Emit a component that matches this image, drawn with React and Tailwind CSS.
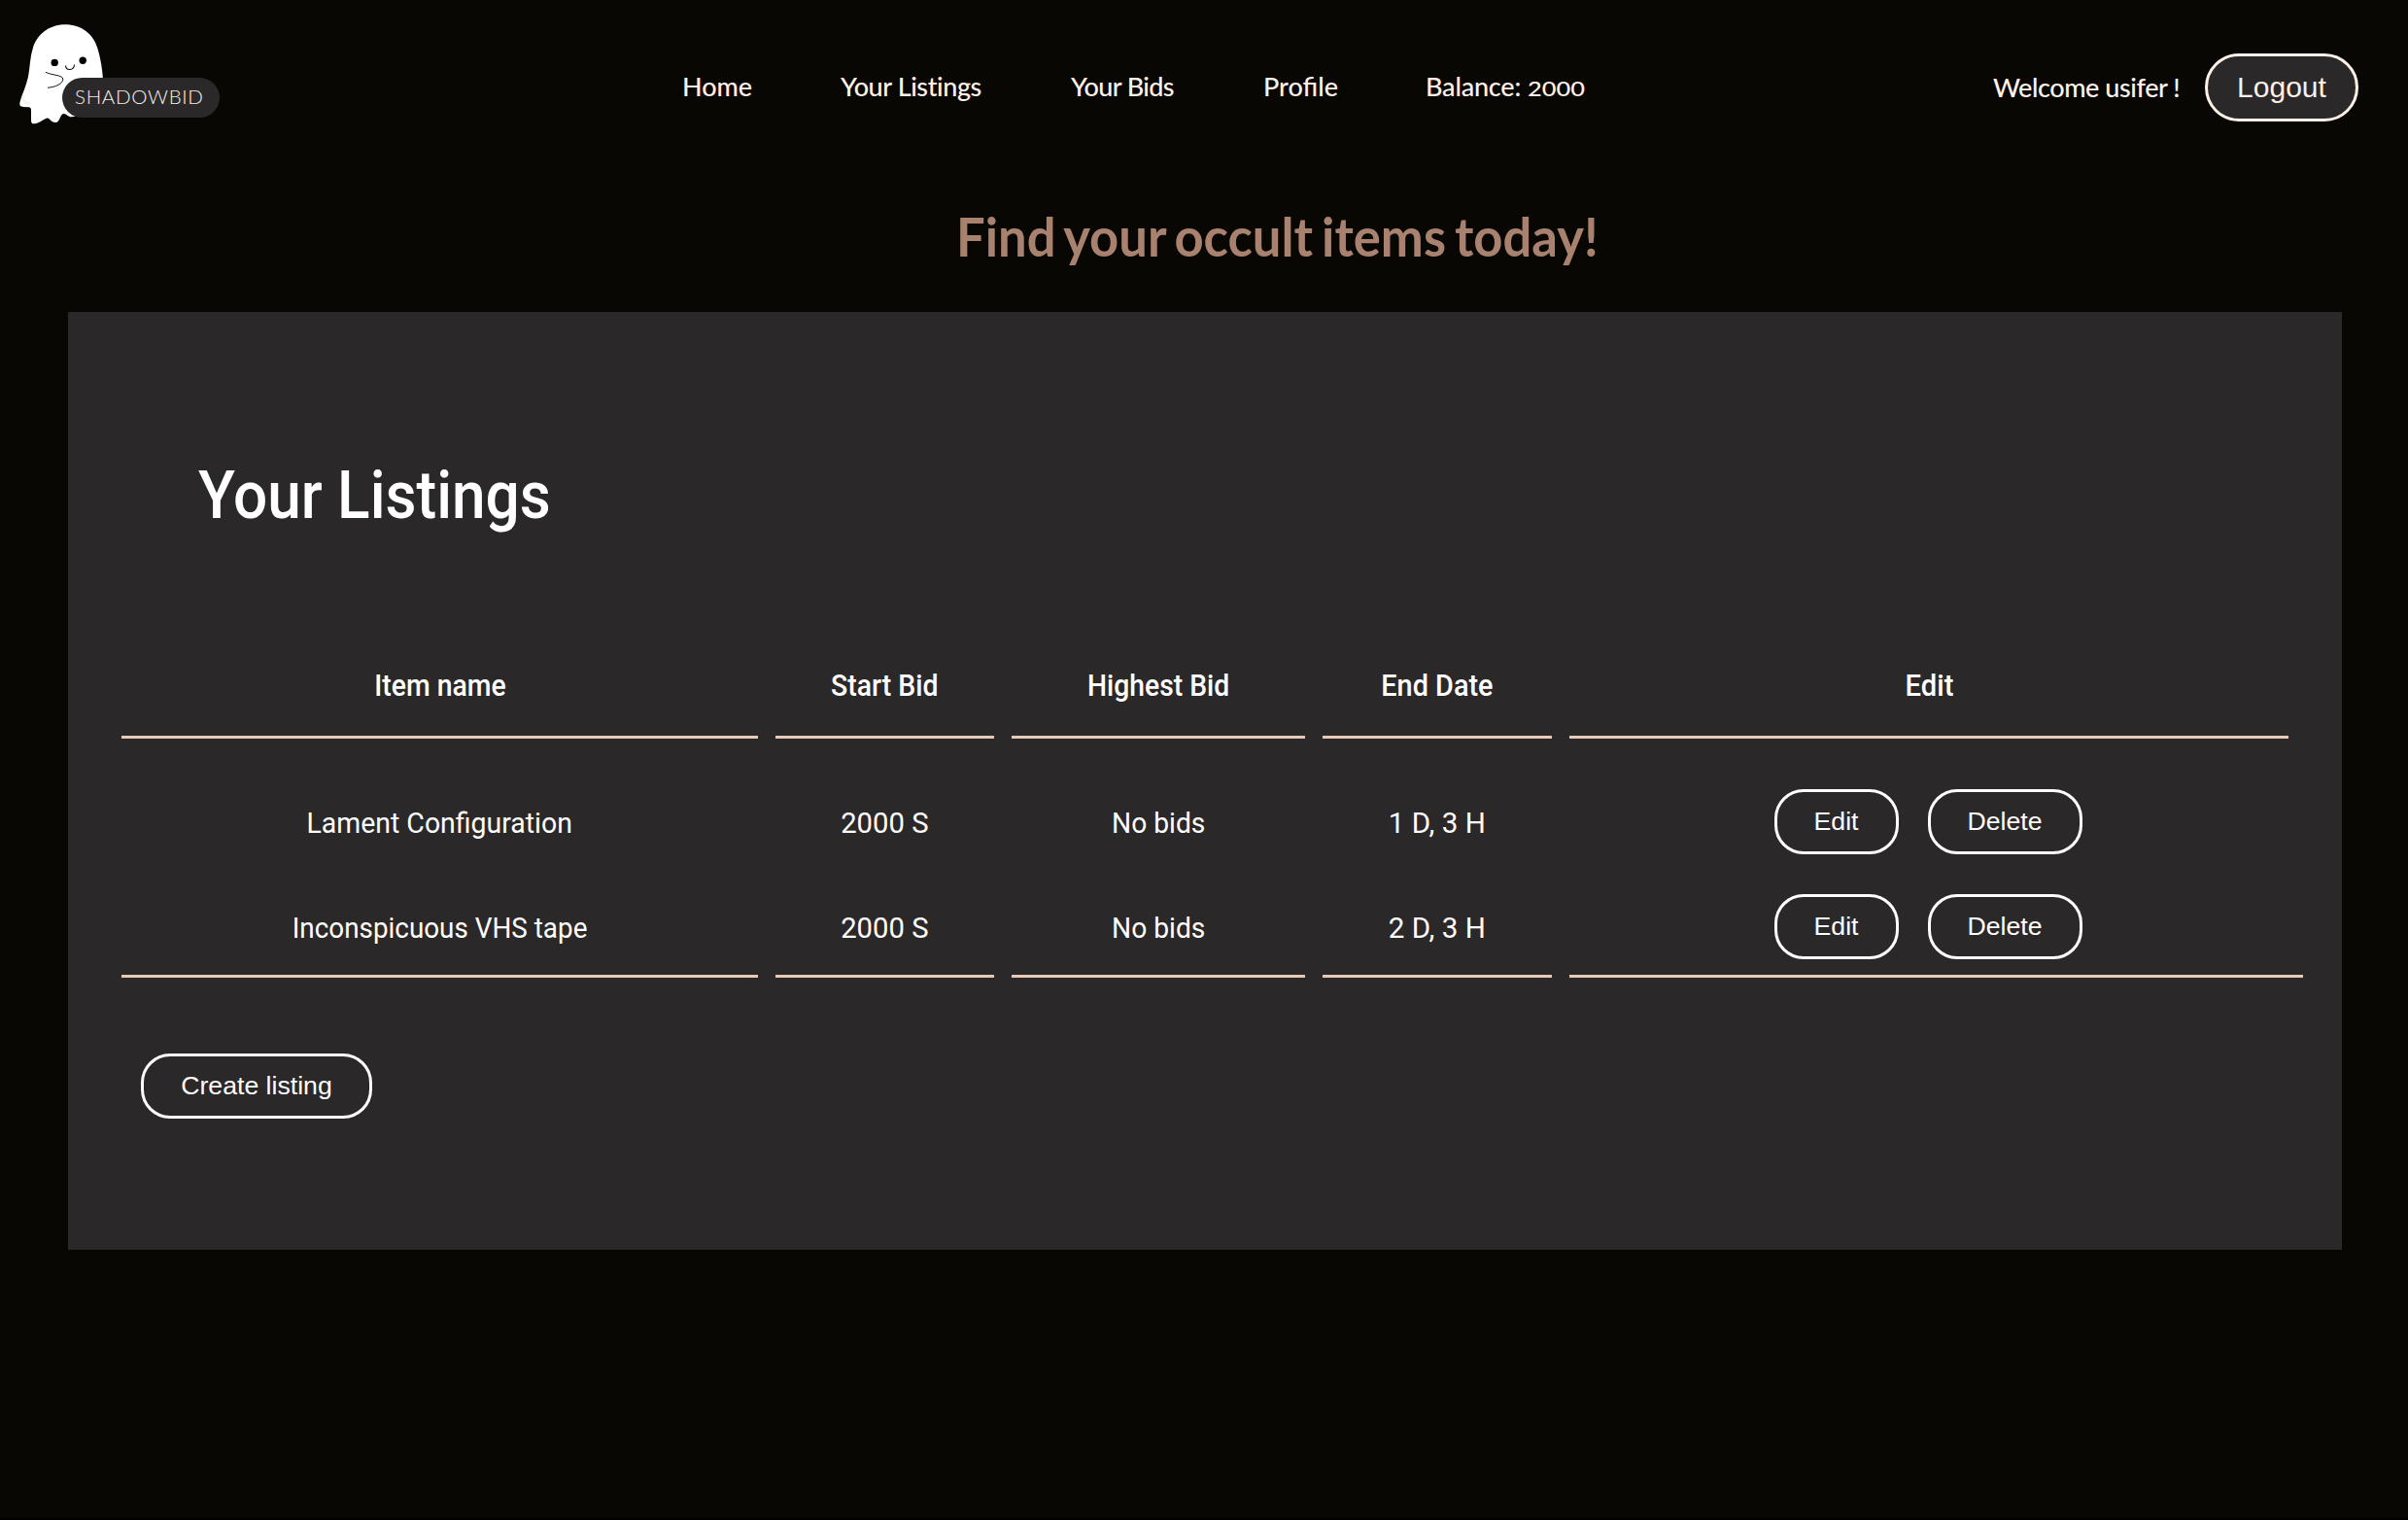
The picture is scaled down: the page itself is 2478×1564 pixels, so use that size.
import React from "react";

const navItems = [
  { label: "Home", cls: "w-[73px] tracking-[-0.1px]" },
  { label: "Your Listings", cls: "w-[147px] tracking-[-0.4px]" },
  { label: "Your Bids", cls: "w-[108px] tracking-[-0.6px]" },
  { label: "Profile", cls: "w-[77px]" },
];

const columns = [
  { label: "Item name", cls: "scale-x-[0.915]" },
  { label: "Start Bid", cls: "scale-x-[0.918]" },
  { label: "Highest Bid", cls: "scale-x-[0.912]" },
  { label: "End Date", cls: "scale-x-[0.93]" },
  { label: "Edit", cls: "scale-x-[0.94]" },
];

const listings = [
  { name: "Lament Configuration", nameCls: "scale-x-[0.948]", start: "2000 S", highest: "No bids", end: "1 D, 3 H" },
  { name: "Inconspicuous VHS tape", nameCls: "scale-x-[0.928]", start: "2000 S", highest: "No bids", end: "2 D, 3 H" },
];

const gridCls = "grid grid-cols-[655px_225px_302px_236px_755px] gap-x-[18px]";

function Logo() {
  return (
    <div className="relative h-[150px] w-[260px] shrink-0">
      <svg className="block h-[150px] w-[260px]" viewBox="0 0 260 150" fill="none">
        <path
          fill="#fff"
          d="M67 25.300C50 25.300 38 36 34 49C31 58 31 67 29.500 76C27.500 88 23 96 20.500 105C19.800 108.500 21 109.800 24 110L30 110.300C31.800 110.500 32 112 32 114V124C32 127.500 34 127.800 37 127C42 126 45 122 49 121.500C51.500 121.500 52 126 57 126C62 126 61.500 117.500 65.500 117C69 117 69.500 120.500 74 120.300L90 118L106 82C105.500 72 103.500 60 100.500 50C96 35 84 25.300 67 25.300Z"
        />
        <path d="M24.500 98C23 103 24.500 106 31 106" stroke="#f1f1f1" strokeWidth="2" />
        <circle cx="56.200" cy="64.400" r="3.700" fill="#000" />
        <circle cx="85.200" cy="62.300" r="3.700" fill="#000" />
        <path d="M67.500 67.500C68 73 76 73 76.500 66.500" stroke="#000" strokeWidth="1.100" />
        <path d="M47 74.300C53 77.500 64 77 64.800 81C65 86.500 57 89.500 49 90.300" stroke="#000" strokeWidth="0.900" />
      </svg>
      <div className="absolute left-[64px] top-[79.5px] flex h-[41.5px] w-[161.5px] items-center rounded-full bg-[#2b2829] pb-[2px] pl-[13px] font-[Lato] text-[20.5px] font-light tracking-[0.7px] text-[#f4f1ef]">
        SHADOWBID
      </div>
    </div>
  );
}

function OutlineButton({ children, className }) {
  return (
    <button
      className={`flex h-[67px] items-center justify-center whitespace-nowrap rounded-[30px] border-[3px] border-white font-['Liberation_Sans'] text-[26.67px] leading-none text-white ${className}`}
    >
      {children}
    </button>
  );
}

function Cell({ last, className = "", textCls = "", children }) {
  return (
    <div className={`flex justify-center ${last ? "h-[86px] border-b-[3px] border-[#e9cab9] pb-4" : "h-[67px]"} items-center ${className}`}>
      {textCls !== null ? <span className={`mt-[2px] whitespace-nowrap ${textCls}`}>{children}</span> : children}
    </div>
  );
}

export default function App() {
  return (
    <div className="h-[1564px] w-[2478px] overflow-hidden border-b-2 border-black bg-[#080704] font-[Roboto]">
      <header className="flex h-[180px] items-center pr-[51px] font-[Lato] text-[27px] font-medium text-[#fff1e7]">
        <div className="self-start">
          <Logo />
        </div>
        <nav className="ml-[442px] flex gap-[90px] whitespace-nowrap pb-[1px]">
          {navItems.map((item) => (
            <a key={item.label} className={item.cls}>
              {item.label}
            </a>
          ))}
          <a className="tracking-[-0.2px]">
            Balance: <span className="inline-block origin-left scale-x-[1.24] text-[20.5px] tracking-normal">2000</span>
          </a>
        </nav>
        <div className="ml-auto flex items-center gap-6">
          <span className="w-[194px] whitespace-nowrap tracking-[-0.42px]">Welcome usifer !</span>
          <button className="flex h-[70px] w-[158px] items-center justify-center rounded-full border-[3px] border-[#fff1e7] bg-[#2b2829] font-['Liberation_Sans'] text-[30px] font-normal leading-none">
            Logout
          </button>
        </div>
      </header>

      <h1 className="ml-[984px] mt-[30px] w-fit origin-left scale-x-[0.956] whitespace-nowrap font-[Lato] text-[55px] font-bold leading-[66px] text-[#a9826f] [word-spacing:-4px]">
        Find your occult items today!
      </h1>

      <main className="ml-[70px] mt-[45px] h-[965px] w-[2340px] bg-[#2b2829] pt-[149px] text-white">
        <h2 className="ml-[134px] w-fit origin-left scale-x-[0.9] whitespace-nowrap text-[69px] font-medium leading-[80px]">
          Your Listings
        </h2>

        <div className="ml-[55px] mt-[138px]">
          <div className={`${gridCls} text-[31px] font-medium leading-[36px]`}>
            {columns.map((c, i) => (
              <div
                key={c.label}
                className={`flex h-[72px] justify-center border-b-[3px] border-[#e9cab9] ${i === 4 ? "mr-[15px]" : ""}`}
              >
                <span className={`h-[36px] whitespace-nowrap ${c.cls}`}>{c.label}</span>
              </div>
            ))}
          </div>

          {listings.map((l, i) => {
            const last = i === listings.length - 1;
            return (
              <div key={l.name} className={`${gridCls} text-[30px] leading-[36px] ${i === 0 ? "mt-[52px]" : "mt-[41px]"}`}>
                <Cell last={last} textCls={l.nameCls}>{l.name}</Cell>
                <Cell last={last} textCls="scale-x-[0.975]">{l.start}</Cell>
                <Cell last={last} textCls="scale-x-[0.94]">{l.highest}</Cell>
                <Cell last={last} textCls="scale-x-[0.985]">{l.end}</Cell>
                <Cell last={last} textCls={null} className="gap-[30px] pr-[17px]">
                  <OutlineButton className="w-[128px]">Edit</OutlineButton>
                  <OutlineButton className="w-[159px]">Delete</OutlineButton>
                </Cell>
              </div>
            );
          })}
        </div>

        <OutlineButton className="ml-[75px] mt-[78px] w-[238px]">Create listing</OutlineButton>
      </main>
    </div>
  );
}
